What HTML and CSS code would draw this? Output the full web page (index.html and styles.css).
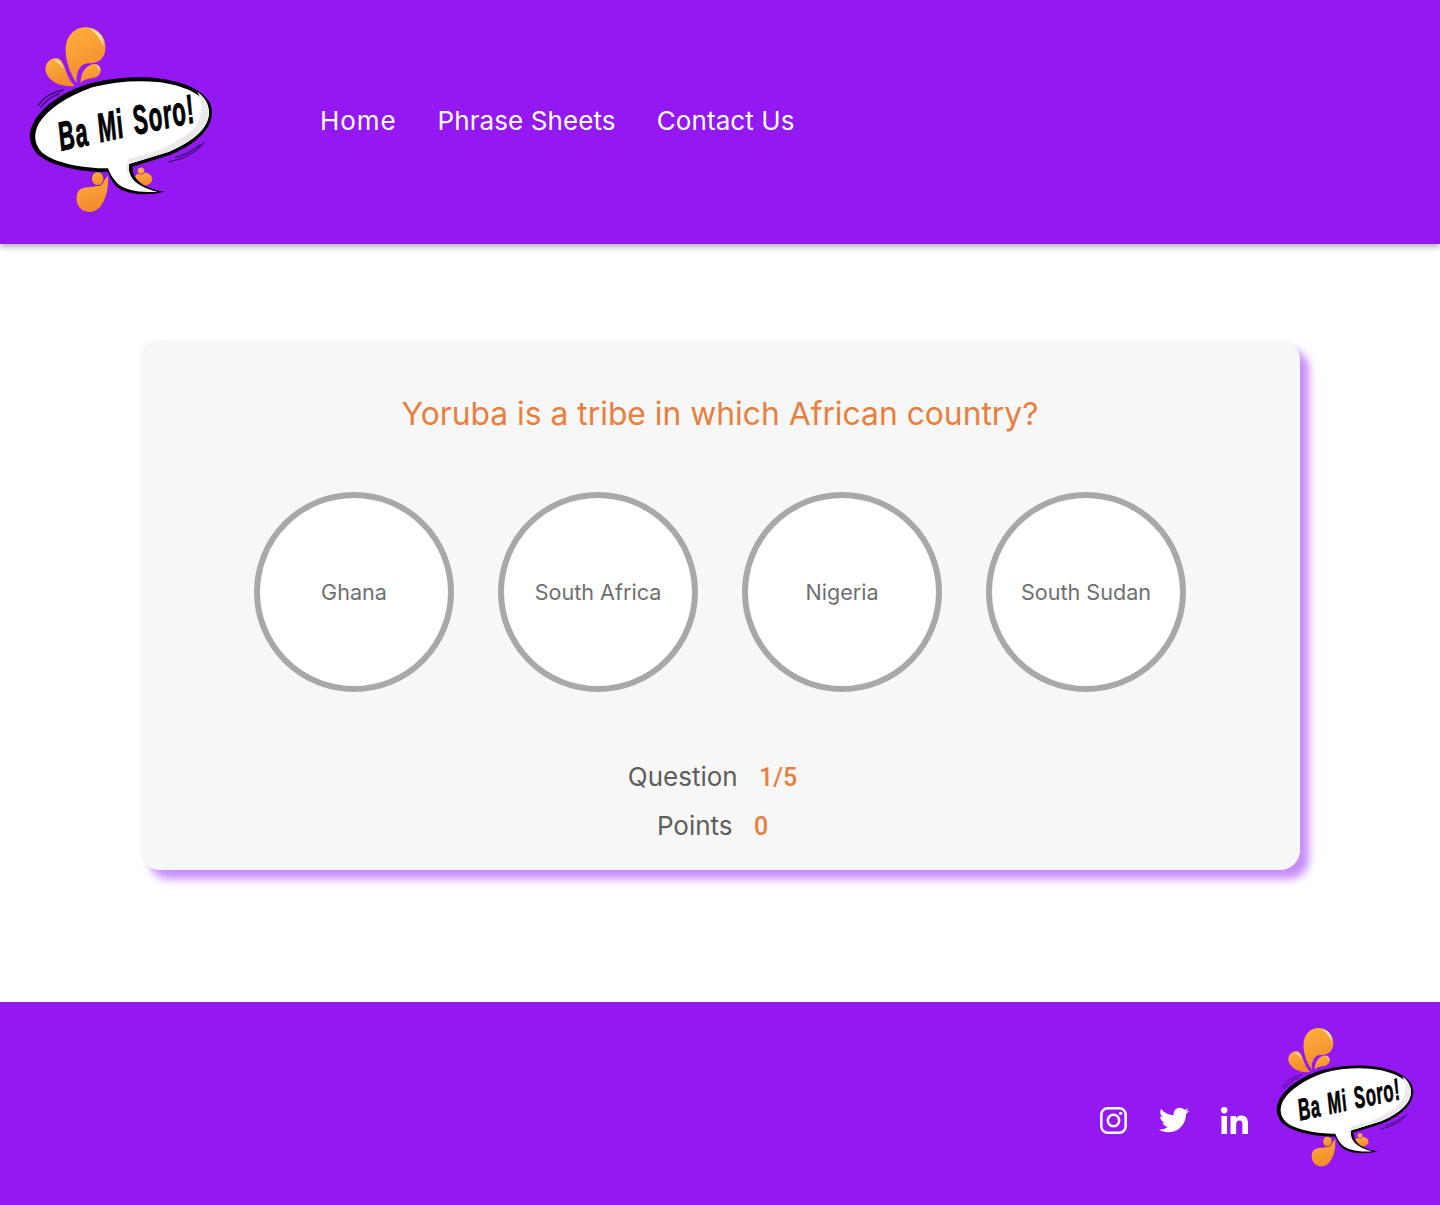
FILE: index.html
```html
<!DOCTYPE html>
<html lang="en">
<head>
  <meta charset="UTF-8" />
  <meta name="viewport" content="width=device-width, initial-scale=1.0" />
  <title>Ba Mi Soro!</title>
  <link rel="stylesheet" href="styles.css">
</head>
<body>
  <header class="site-header">
    <a class="logo" href="#">
      <svg class="logo-svg" viewBox="85 78 552 564" role="img" aria-label="Ba Mi Soro!">
        <defs>
          <linearGradient id="drop" x1="0" y1="0" x2="0.3" y2="1">
            <stop offset="0" stop-color="#fdb13e" />
            <stop offset="1" stop-color="#f38b2c" />
          </linearGradient>
        </defs>
        <g id="logo-art">
          <!-- top splash -->
          <path fill="url(#drop)" d="M228 250C205 215 195 180 195 150C195 105 225 80 258 82C295 84 318 115 314 150C310 180 290 190 262 190C240 190 225 215 228 250Z" />
          <path fill="url(#drop)" d="M222 258C180 262 145 245 135 215C130 190 150 172 170 175C195 180 190 225 222 258Z" />
          <path fill="url(#drop)" d="M240 250C238 215 262 190 285 192C305 195 305 225 285 232C265 238 250 235 240 250Z" />
          <path fill="#ffe3b8" d="M266 86C292 88 312 110 308 138C298 114 286 98 266 86Z" />
          <path fill="#ffe3b8" d="M158 177C172 176 184 188 188 206C178 194 170 184 158 177Z" />
          <path fill="#ffe3b8" d="M282 195C292 196 300 204 299 214C294 206 290 200 282 195Z" />
          <!-- bottom splash -->
          <path fill="url(#drop)" d="M322 525C326 590 300 638 265 636C235 635 222 605 230 580C240 555 270 565 285 558C300 550 315 540 322 525Z" />
          <ellipse cx="291" cy="536" rx="19" ry="21" fill="url(#drop)" stroke="#6d14b8" stroke-width="3" />
          <ellipse cx="428" cy="537" rx="27" ry="20" fill="url(#drop)" />
          <circle cx="421" cy="512" r="11" fill="#f9a748" stroke="#6d14b8" stroke-width="2" />
          <!-- hatch lines -->
          <g fill="none" stroke="#3b1470" stroke-width="4" stroke-linecap="round">
            <path d="M112 318C125 295 150 278 188 270" />
            <path d="M120 322C135 302 155 288 175 282" />
            <path d="M503 486C545 478 585 458 610 428" />
            <path d="M525 472C555 464 580 450 598 434" />
          </g>
          <!-- bubble -->
          <path fill="#000" d="M322 516C240 516 150 500 110 462C85 435 80 400 100 365C125 320 185 275 270 250C340 232 420 228 480 236C570 248 634 285 634 335C635 385 590 430 510 464L396 500C392 530 420 565 492 575C430 590 370 582 345 557C332 542 326 528 322 516Z" />
          <path fill="#fff" d="M322 505C245 505 155 488 122 455C100 432 98 400 115 370C140 330 195 290 275 262C340 244 410 240 470 246C550 254 622 288 625 335C626 380 585 420 505 455L385 492C380 530 405 560 470 575C420 580 370 570 350 550C335 535 328 520 322 505Z" />
          <path fill="#ebe9e9" d="M590 275C612 290 625 312 625 335C626 380 585 420 505 455L385 492L383 525C373 505 375 488 387 476C450 462 530 435 580 385C605 355 610 310 590 275Z" />
        </g>
        <text class="logo-text" x="0" y="0" transform="translate(182 452) rotate(-12) scale(0.54 1)">Ba Mi Soro!</text>
      </svg>
    </a>
    <nav class="nav">
      <a href="#">Home</a>
      <a href="#">Phrase Sheets</a>
      <a href="#">Contact Us</a>
    </nav>
  </header>

  <main class="main">
    <section class="card">
      <h1 class="question">Yoruba is a tribe in which African country?</h1>
      <div class="options">
        <button class="option">Ghana</button>
        <button class="option">South Africa</button>
        <button class="option">Nigeria</button>
        <button class="option">South Sudan</button>
      </div>
      <div class="stats">
        <p class="stat">Question <span class="stat-value">1/5</span></p>
        <p class="stat">Points <span class="stat-value">0</span></p>
      </div>
    </section>
  </main>

  <footer class="site-footer">
    <a class="social" href="#" aria-label="Instagram">
      <svg class="icon-instagram" viewBox="0 0 28 28">
        <rect x="1.4" y="1.4" width="25.2" height="25.2" rx="6.5" fill="none" stroke="#fff" stroke-width="2.6" />
        <circle cx="14" cy="14" r="5.9" fill="none" stroke="#fff" stroke-width="2.6" />
        <circle cx="21.4" cy="6.6" r="1.7" fill="#fff" />
      </svg>
    </a>
    <a class="social" href="#" aria-label="Twitter">
      <svg class="icon-twitter" viewBox="0 0 512 512">
        <path fill="#fff" d="M459.37 151.716c.325 4.548.325 9.097.325 13.645 0 138.72-105.583 298.558-298.558 298.558-59.452 0-114.68-17.219-161.137-47.106 8.447.974 16.568 1.299 25.34 1.299 49.055 0 94.213-16.568 130.274-44.832-46.132-.975-84.792-31.188-98.112-72.772 6.498.974 12.995 1.624 19.818 1.624 9.421 0 18.843-1.3 27.614-3.573-48.081-9.747-84.143-51.98-84.143-102.985v-1.299c13.969 7.797 30.214 12.67 47.431 13.319-28.264-18.843-46.781-51.005-46.781-87.391 0-19.492 5.197-37.36 14.294-52.954 51.655 63.675 129.3 105.258 216.365 109.807-1.624-7.797-2.599-15.918-2.599-24.04 0-57.828 46.782-104.934 104.934-104.934 30.213 0 57.502 12.67 76.67 33.137 23.715-4.548 46.456-13.645 66.599-25.34-7.798 24.366-22.34 44.833-43.132 59.775 20.468-2.599 40.936-8.447 59.451-16.568-14.618 20.468-31.836 38.511-51.655 53.129z" />
      </svg>
    </a>
    <a class="social" href="#" aria-label="LinkedIn">
      <svg class="icon-linkedin" viewBox="0 0 448 448">
        <path fill="#fff" d="M100.28 448H7.4V148.9h92.88zM53.79 108.1C24.09 108.1 0 83.5 0 53.8a53.79 53.79 0 0 1 107.58 0c0 29.7-24.1 54.3-53.79 54.3zM447.9 448h-92.68V302.4c0-34.7-.7-79.2-48.29-79.2-48.29 0-55.69 37.7-55.69 76.7V448h-92.78V148.9h89.08v40.8h1.3c12.4-23.5 42.69-48.3 87.88-48.3 94 0 111.28 61.9 111.28 142.3V448z" />
      </svg>
    </a>
    <a class="footer-logo" href="#">
      <svg class="logo-svg-small" viewBox="85 78 552 564" role="img" aria-label="Ba Mi Soro!">
        <use href="#logo-art" />
        <text class="logo-text" x="0" y="0" transform="translate(182 452) rotate(-12) scale(0.54 1)">Ba Mi Soro!</text>
      </svg>
    </a>
  </footer>
</body>
</html>
```

FILE: styles.css
```css
* {
  box-sizing: border-box;
}

body {
  font-family: Inter, "Open Sans", sans-serif;
  margin: 0;
  padding: 0;
  background-color: white;
}

a {
  color: inherit;
  text-decoration: none;
}

.site-header {
  display: flex;
  align-items: center;
  height: 244px;
  padding-left: 29px;
  background-color: #9318f2;
  box-shadow: 0 3px 6px rgba(0, 0, 0, 0.3);
}

.logo {
  display: flex;
  margin-bottom: 4px;
}

.logo-svg {
  width: 184px;
  height: 188px;
}

.logo-text {
  font-family: "Liberation Sans", sans-serif;
  font-size: 122px;
  font-weight: bold;
  font-style: italic;
  letter-spacing: 6px;
  word-spacing: 14px;
  fill: #000;
  stroke: #000;
  stroke-width: 3px;
}

.nav {
  display: flex;
  gap: 41px;
  margin-left: 107px;
  margin-bottom: 4px;
  color: white;
  font-size: 26px;
  letter-spacing: 0.1px;
}

.nav a:first-child {
  letter-spacing: 0.9px;
}

.main {
  padding: 96px 140px 132px;
}

.card {
  height: 530px;
  padding-top: 54px;
  background-color: #f7f7f7;
  border-radius: 20px;
  box-shadow: 9px 9px 9px #c88dfb;
  text-align: center;
}

.question {
  margin: 0;
  color: #e97f3d;
  font-size: 31.8px;
  font-weight: 400;
  line-height: 40px;
}

.options {
  display: flex;
  justify-content: center;
  gap: 44px;
  margin-top: 58px;
}

.option {
  width: 200px;
  height: 200px;
  padding: 0;
  border: 6px solid #a8a8a8;
  border-radius: 50%;
  background-color: white;
  color: #707070;
  font-family: inherit;
  font-size: 21.6px;
}

.stats {
  margin-top: 70px;
  padding-right: 15px;
  color: #5e5e5e;
  font-size: 26px;
}

.stat {
  margin: 0 0 18px;
  line-height: 30px;
}

.stat-value {
  margin-left: 14px;
  color: #e97f3d;
  font-family: Roboto, sans-serif;
  font-size: 25px;
  font-weight: 500;
}

.site-footer {
  display: flex;
  align-items: center;
  justify-content: flex-end;
  height: 203px;
  padding: 0 26px 0 0;
  background-color: #9318f2;
}

.social {
  display: flex;
  margin-top: 33px;
  margin-right: 32px;
}

.icon-instagram {
  width: 27px;
  height: 27px;
}

.icon-twitter {
  width: 30px;
  height: 30px;
}

.icon-linkedin {
  width: 27px;
  height: 27px;
}

.footer-logo {
  display: flex;
  margin-left: -4px;
  margin-bottom: 12px;
}

.logo-svg-small {
  width: 138px;
  height: 141px;
}
```
